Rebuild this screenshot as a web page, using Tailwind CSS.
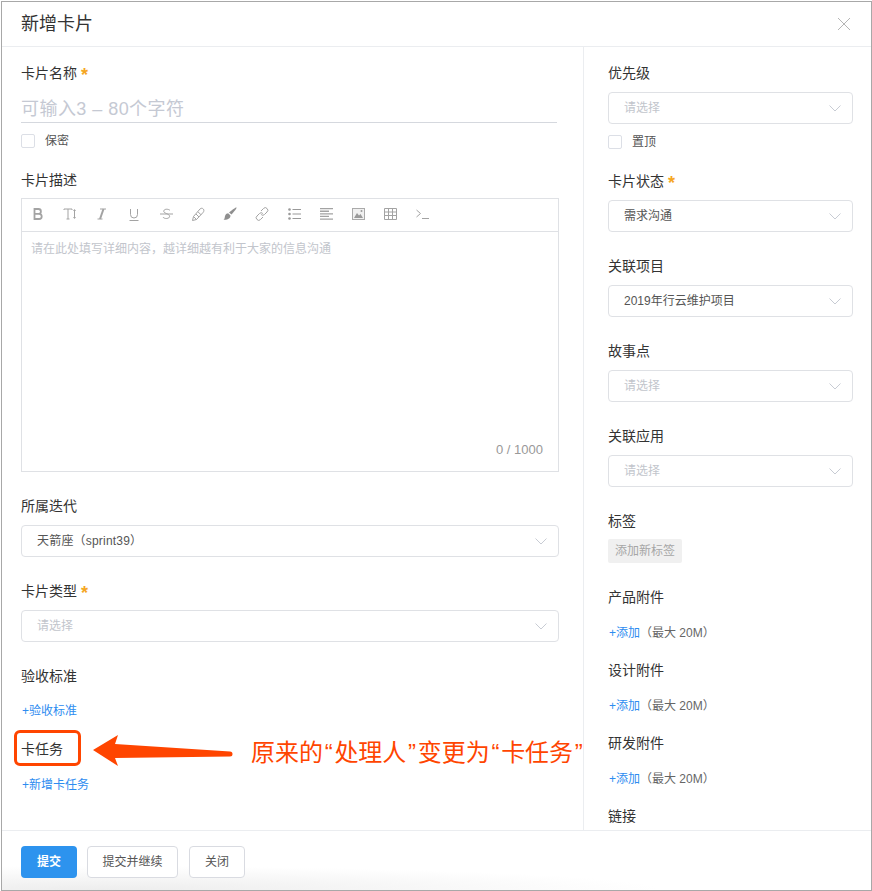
<!DOCTYPE html>
<html>
  <head>
    <meta charset="UTF-8" />
    <title>新增卡片</title>
    <script src="https://cdn.jsdelivr.net/npm/@tailwindcss/browser@4"></script>
  </head>
  <body class="bg-white">
    <div class="relative w-[872px] h-[891px] overflow-hidden bg-white pl-px pt-px font-['Helvetica_Neue','Liberation_Sans','Noto_Sans_CJK_SC',sans-serif] text-[14px] leading-[20px] text-[#333]">
      <div class="flex flex-col w-[871px] h-[890px] border border-[#a8a8a8] bg-white">
        <!-- header -->
        <div class="flex items-center justify-between h-[45px] shrink-0 border-b border-[#ebedf0] pl-[19px] pr-[20px]">
          <h1 class="text-[18px] text-[#333]">新增卡片</h1>
          <svg class="w-[14px] h-[14px]" viewBox="0 0 14 14" fill="none" stroke="#b5b5b5" stroke-width="1"><path d="M1 1l12 12M13 1L1 13" /></svg>
        </div>

        <!-- body -->
        <div class="flex flex-1 min-h-0">
          <!-- left column -->
          <div class="w-[582px] shrink-0 border-r border-[#ebedf0] pl-[19px] pt-[16px]">
            <div class="h-[20px]">卡片名称 <span class="inline-block translate-y-[3px] text-[18px] leading-none font-bold text-[#f5a623]">*</span></div>
            <div class="mt-[11px] w-[536px] h-[29px] border-b border-[#d5d8de] text-[18px] leading-[30px] tracking-[0.45px] text-[#c5c9d3]">可输入3 – 80个字符</div>
            <div class="flex items-center mt-[10px] h-[16px] text-[12px]">
              <span class="w-[14px] h-[14px] border border-[#dcdfe6] rounded-[2px]"></span>
              <span class="ml-[10px] text-[#555]">保密</span>
            </div>

            <div class="h-[20px] mt-[21px]">卡片描述</div>
            <div class="mt-[8px] w-[538px] h-[274px] border border-[#dfe1e5] flex flex-col">
              <div class="flex h-[33px] shrink-0 border-b border-[#dfe1e5] pb-[2px] text-[#999]">
                <span class="w-[32px] flex items-center justify-center">
                  <svg class="w-[12px] h-[12px]" viewBox="0 0 12 12" fill="none" stroke="#a3a3a3" stroke-width="1.800"><path d="M2.500 1h4a2.400 2.400 0 010 4.800h-4zM2.500 5.800h4.600a2.600 2.600 0 010 5.200H2.500z" /></svg>
                </span>
                <span class="w-[32px] flex items-center justify-center">
                  <svg class="w-[14px] h-[12px]" viewBox="0 0 14 12" fill="none" stroke="#a3a3a3" stroke-width="1"><path d="M1 2V1h8v1M5 1v10M3.500 11h3M11.500 2v8" /><path d="M10 3l1.500-2L13 3zM10 9l1.500 2L13 9z" fill="#a3a3a3" stroke="none" /></svg>
                </span>
                <span class="w-[32px] flex items-center justify-center">
                  <svg class="w-[12px] h-[12px]" viewBox="0 0 12 12" fill="none" stroke="#a3a3a3"><path d="M4 1h6" stroke-width="1" /><path d="M7.500 1L4 11" stroke-width="2" /><path d="M1.500 11h5" stroke-width="1" /></svg>
                </span>
                <span class="w-[32px] flex items-center justify-center">
                  <svg class="w-[12px] h-[13px]" viewBox="0 0 12 13" fill="none" stroke="#a3a3a3" stroke-width="1"><path d="M2.500 1v5.500a3.500 3.500 0 007 0V1M1.500 12.500h9" /></svg>
                </span>
                <span class="w-[32px] flex items-center justify-center">
                  <svg class="w-[13px] h-[12px]" viewBox="0 0 13 12" fill="none" stroke="#a3a3a3" stroke-width="1"><path d="M10 2.500C9 1 4.500.500 3.800 2.800 3 5.500 9.500 5.500 9.600 8.300 9.700 11 4 11.200 3 9" /><path d="M0 6h13" /></svg>
                </span>
                <span class="w-[32px] flex items-center justify-center">
                  <svg class="w-[15px] h-[15px]" viewBox="0 0 15 15" fill="none" stroke="#a3a3a3" stroke-width="1"><path d="M1.500 13.500l1-4 6.500-7.500c1-1 2.500-1 3.300 0s.7 2.300 0 3.200L5.500 12.500zM2.500 9.500l3 3M5 7l3 3M7 4.800l3 3" /></svg>
                </span>
                <span class="w-[32px] flex items-center justify-center">
                  <svg class="w-[14px] h-[14px]" viewBox="0 0 14 14" fill="#8f8f8f"><path d="M13.500.500c.4.400-.5 2-5 7L6 5.500C11 1.300 13 .1 13.500.500z" /><path d="M5.200 6.200l2.300 2.300C7.500 11 5.500 13 .5 12.800c1.500-1 1-2.500 1.700-4.300.6-1.500 1.800-2.300 3-2.300z" /></svg>
                </span>
                <span class="w-[32px] flex items-center justify-center">
                  <svg class="w-[14px] h-[14px]" viewBox="0 0 14 14" fill="none" stroke="#a3a3a3" stroke-width="1"><path d="M6 4l2.500-2.500a2.300 2.300 0 013.500 0 2.300 2.300 0 010 3.500L9.500 7.500a2.300 2.300 0 01-3.300 0" /><path d="M8 10l-2.500 2.500a2.300 2.300 0 01-3.500 0 2.300 2.300 0 010-3.500L4.500 6.500a2.300 2.300 0 013.300 0" /></svg>
                </span>
                <span class="w-[32px] flex items-center justify-center">
                  <svg class="w-[13px] h-[12px]" viewBox="0 0 13 12" fill="#999"><circle cx="1.500" cy="1.500" r="1.300" /><circle cx="1.500" cy="6" r="1.300" /><circle cx="1.500" cy="10.500" r="1.300" /><path d="M4.500 1h8.500v1H4.500zM4.500 5.500h8.500v1H4.500zM4.500 10h8.500v1H4.500z" /></svg>
                </span>
                <span class="w-[32px] flex items-center justify-center">
                  <svg class="w-[13px] h-[12px]" viewBox="0 0 13 12" fill="#a3a3a3"><path d="M0 0h13v1.300H0zM0 2.600h9v1.300H0zM0 5.200h13v1.300H0zM0 7.800h9v1.300H0zM0 10.400h13v1.300H0z" /></svg>
                </span>
                <span class="w-[32px] flex items-center justify-center">
                  <svg class="w-[13px] h-[12px]" viewBox="0 0 13 12"><rect x=".5" y=".5" width="12" height="11" fill="#f0f0f0" stroke="#aaa" /><path d="M2 10l3-5 2 2.500L8.500 6l2.500 4z" fill="#999" /><circle cx="9.500" cy="3" r="1" fill="#999" /></svg>
                </span>
                <span class="w-[32px] flex items-center justify-center">
                  <svg class="w-[13px] h-[12px]" viewBox="0 0 13 12" fill="none" stroke="#a3a3a3" stroke-width="1"><path d="M.5.500h12v11H.5zM.5 4h12M.5 7.500h12M4.500.500v11M8.500.500v11" /></svg>
                </span>
                <span class="w-[32px] flex items-center justify-center">
                  <svg class="w-[13px] h-[10px]" viewBox="0 0 13 10" fill="none" stroke="#a3a3a3" stroke-width="1"><path d="M.5 1l4 3.500-4 3.500M6 9.500h7" /></svg>
                </span>
              </div>
              <div class="flex-1 flex flex-col justify-between pl-[9px] pr-[15px] pt-[7px] pb-[11px] text-[12px] text-[#c2c5cc]">
                <div>请在此处填写详细内容，越详细越有利于大家的信息沟通</div>
                <div class="text-right text-[13px] text-[#999]">0 / 1000</div>
              </div>
            </div>

            <div class="h-[20px] mt-[24px]">所属迭代</div>
            <div class="flex items-center justify-between mt-[9px] w-[538px] h-[32px] border border-[#dfe1e5] rounded-[4px] pl-[15px] pr-[11px] text-[12px] text-[#555]">
              <span class="tracking-[0.2px]">天箭座（sprint39）</span>
              <svg class="w-[12px] h-[7px]" viewBox="0 0 12 7" fill="none" stroke="#c8ccd4"><path d="M.5.500L6 6 11.500.500" /></svg>
            </div>

            <div class="h-[20px] mt-[24px]">卡片类型 <span class="inline-block translate-y-[3px] text-[18px] leading-none font-bold text-[#f5a623]">*</span></div>
            <div class="flex items-center justify-between mt-[9px] w-[538px] h-[32px] border border-[#dfe1e5] rounded-[4px] pl-[15px] pr-[11px] text-[12px] text-[#c2c5cc]">
              <span>请选择</span>
              <svg class="w-[12px] h-[7px]" viewBox="0 0 12 7" fill="none" stroke="#c8ccd4"><path d="M.5.500L6 6 11.500.500" /></svg>
            </div>

            <div class="h-[20px] mt-[24px]">验收标准</div>
            <div class="mt-[15px] h-[20px] pl-px text-[12px] text-[#2d8cf0]">+验收标准</div>
            <div class="mt-[18px] h-[20px]">卡任务</div>
            <div class="mt-[16px] h-[20px] pl-px text-[12px] text-[#2d8cf0]">+新增卡任务</div>
          </div>

          <!-- right column -->
          <div class="flex-1 min-w-0 overflow-hidden pl-[24px] pt-[16px]">
            <div class="h-[20px]">优先级</div>
            <div class="flex items-center justify-between mt-[9px] w-[245px] h-[32px] border border-[#dfe1e5] rounded-[4px] pl-[15px] pr-[11px] text-[12px] text-[#c2c5cc]">
              <span>请选择</span>
              <svg class="w-[12px] h-[7px]" viewBox="0 0 12 7" fill="none" stroke="#c8ccd4"><path d="M.5.500L6 6 11.500.500" /></svg>
            </div>
            <div class="flex items-center mt-[10px] h-[16px] text-[12px]">
              <span class="w-[14px] h-[14px] border border-[#dcdfe6] rounded-[2px]"></span>
              <span class="ml-[10px] text-[#555]">置顶</span>
            </div>

            <div class="h-[20px] mt-[21px]">卡片状态 <span class="inline-block translate-y-[3px] text-[18px] leading-none font-bold text-[#f5a623]">*</span></div>
            <div class="flex items-center justify-between mt-[9px] w-[245px] h-[32px] border border-[#dfe1e5] rounded-[4px] pl-[15px] pr-[11px] text-[12px] text-[#555]">
              <span>需求沟通</span>
              <svg class="w-[12px] h-[7px]" viewBox="0 0 12 7" fill="none" stroke="#c8ccd4"><path d="M.5.500L6 6 11.500.500" /></svg>
            </div>

            <div class="h-[20px] mt-[24px]">关联项目</div>
            <div class="flex items-center justify-between mt-[9px] w-[245px] h-[32px] border border-[#dfe1e5] rounded-[4px] pl-[15px] pr-[11px] text-[12px] text-[#555]">
              <span>2019年行云维护项目</span>
              <svg class="w-[12px] h-[7px]" viewBox="0 0 12 7" fill="none" stroke="#c8ccd4"><path d="M.5.500L6 6 11.500.500" /></svg>
            </div>

            <div class="h-[20px] mt-[24px]">故事点</div>
            <div class="flex items-center justify-between mt-[9px] w-[245px] h-[32px] border border-[#dfe1e5] rounded-[4px] pl-[15px] pr-[11px] text-[12px] text-[#c2c5cc]">
              <span>请选择</span>
              <svg class="w-[12px] h-[7px]" viewBox="0 0 12 7" fill="none" stroke="#c8ccd4"><path d="M.5.500L6 6 11.500.500" /></svg>
            </div>

            <div class="h-[20px] mt-[24px]">关联应用</div>
            <div class="flex items-center justify-between mt-[9px] w-[245px] h-[32px] border border-[#dfe1e5] rounded-[4px] pl-[15px] pr-[11px] text-[12px] text-[#c2c5cc]">
              <span>请选择</span>
              <svg class="w-[12px] h-[7px]" viewBox="0 0 12 7" fill="none" stroke="#c8ccd4"><path d="M.5.500L6 6 11.500.500" /></svg>
            </div>

            <div class="h-[20px] mt-[24px]">标签</div>
            <div class="mt-[8px] w-[74px] h-[24px] rounded-[2px] bg-[#f0f0f0] text-center text-[12px] leading-[24px] text-[#a6a6a6]">添加新标签</div>

            <div class="h-[20px] mt-[24px]">产品附件</div>
            <div class="mt-[16px] h-[20px] pl-px text-[12px] text-[#666]"><span class="text-[#2d8cf0]">+添加</span>（最大 20M）</div>
            <div class="h-[20px] mt-[17px]">设计附件</div>
            <div class="mt-[16px] h-[20px] pl-px text-[12px] text-[#666]"><span class="text-[#2d8cf0]">+添加</span>（最大 20M）</div>
            <div class="h-[20px] mt-[17px]">研发附件</div>
            <div class="mt-[16px] h-[20px] pl-px text-[12px] text-[#666]"><span class="text-[#2d8cf0]">+添加</span>（最大 20M）</div>
            <div class="h-[20px] mt-[17px]">链接</div>
          </div>
        </div>

        <!-- footer -->
        <div class="flex items-start gap-[10px] h-[60px] shrink-0 border-t border-[#ebedf0] pl-[19px] pt-[15px] text-[12px] bg-[radial-gradient(ellipse_560px_24px_at_100px_100%,#ededed,#ffffff)]">
          <button class="w-[56px] h-[32px] rounded-[4px] bg-[#2d93ee] text-white font-bold">提交</button>
          <button class="w-[91px] h-[32px] rounded-[4px] border border-[#d9dbe1] bg-white text-[#555]">提交并继续</button>
          <button class="ml-px w-[56px] h-[32px] rounded-[4px] border border-[#d9dbe1] bg-white text-[#555]">关闭</button>
        </div>
      </div>

      <!-- annotation over the form -->
      <div class="absolute left-[14px] top-[730px] w-[67px] h-[36px] border-[3px] border-[#ff4500] rounded-[6px]"></div>
      <svg class="absolute left-[90px] top-[732px] w-[146px] h-[38px]" viewBox="0 0 146 38" fill="#ff4500"><path d="M3 18L28 3l-3 9 115 7.500a2.500 2.500 0 010 5L25 26l3 8z" /></svg>
      <div class="absolute left-[251px] top-[738px] whitespace-nowrap text-[24px] leading-[30px] text-[#ff4500]">原来的<span class="px-[1.700px]">“</span>处理人<span class="px-[1.700px]">”</span>变更为<span class="px-[1.700px]">“</span>卡任务<span class="px-[1.700px]">”</span></div>
    </div>
  </body>
</html>
